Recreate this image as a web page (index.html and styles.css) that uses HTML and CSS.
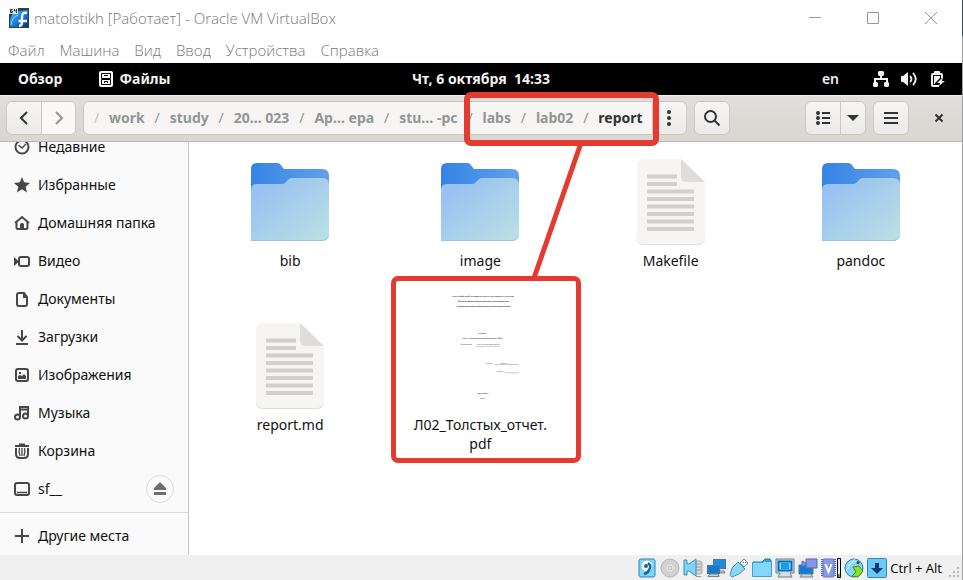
FILE: index.html
```html
<!DOCTYPE html>
<html lang="ru">
<head>
<meta charset="utf-8">
<title>matolstikh [Работает] - Oracle VM VirtualBox</title>
<link rel="stylesheet" href="styles.css">
</head>
<body>
<div class="window">
  <header class="titlebar">
    <svg class="vm-icon" width="20" height="20" viewBox="0 0 20 20"><defs><linearGradient id="vm" x1="0" y1="0" x2="1" y2="1"><stop offset="0" stop-color="#3cc4ff"/><stop offset=".6" stop-color="#1673d8"/><stop offset="1" stop-color="#07306e"/></linearGradient></defs><path fill="#2d3d52" d="M0 0h20v20H0z"/><path fill="url(#vm)" d="M1 12q1-8 9-9l9-1v17H1z"/><path fill="none" stroke="#8fdcff" d="M2 17q1-8 7-10"/><path fill="none" stroke="#fff" stroke-width="2.400" d="M18 5c-4-1-5 1-5 4v5c0 3-1 4-3 4M9.500 13H18"/><path fill="#e7ecef" d="M0 0h9v6H0z"/><path fill="none" stroke="#273743" d="M3.500 1.500h-2v3h2v-1.500h-2M5.500 1v2h2M7.500 1v4"/></svg>
    <h1>matolstikh [Работает] - Oracle VM VirtualBox</h1>
    <div class="captions">
      <button aria-label="Свернуть"><svg width="12" height="12"><path d="M0 5.500h12"/></svg></button>
      <button aria-label="Развернуть"><svg width="12" height="12"><path d="M.5.5h11v11H.5z"/></svg></button>
      <button aria-label="Закрыть окно"><svg width="12" height="12"><path d="M0 0l12 12M12 0L0 12"/></svg></button>
    </div>
  </header>
  <nav class="menubar" aria-label="Меню"><button>Файл</button><button>Машина</button><button>Вид</button><button>Ввод</button><button>Устройства</button><button>Справка</button></nav>

  <div class="topbar">
    <div class="top-left">
      <button>Обзор</button>
      <button class="app"><svg width="14" height="16" viewBox="0 0 14 16"><rect width="14" height="16" rx="2" fill="#fff"/><path fill="none" stroke="#000" d="M2.500 2.500h9v5h-9zM2.500 8.500h9v5h-9z"/><path fill="none" stroke="#000" d="M5 4.500h4M5.500 12v-1.500h3V12"/></svg>Файлы</button>
    </div>
    <button class="clock">Чт, 6 октября&nbsp; 14:33</button>
    <div class="top-right">
      <button class="lang">en</button>
      <button class="status" aria-label="Система">
        <svg width="16" height="16"><path fill="#f2f2f2" d="M6 0h4l1 1v3l-1 1H9v2h6v4l1 1v3l-1 1h-3l-1-1v-3l1-1h1V9H3v2h1l1 1v3l-1 1H1l-1-1v-3l1-1V7h6V5H6L5 4V1z"/></svg>
        <svg width="16" height="16"><path fill="#f2f2f2" d="M0 6q0-1 1-1h1l5-4v14l-5-4H1q-1 0-1-1z"/><path fill="none" stroke="#f2f2f2" stroke-width="1.800" stroke-linecap="round" d="M9.500 5.500q2 2.500 0 5"/><path fill="none" stroke="#f2f2f2" stroke-width="1.800" stroke-linecap="round" d="M12.500 2.500q4.500 5.500 0 11"/></svg>
        <svg width="16" height="16"><path fill="none" stroke="#f2f2f2" stroke-width="2" d="M13 7V4q0-1-1-1H4Q3 3 3 4v10q0 1 1 1h6"/><path fill="#f2f2f2" d="M5 1q0-1 1-1h4q1 0 1 1v2H5zM5 5h6v2L6 12v1H5zM14 6l-6 6h3l-1 3 6-5h-3z"/></svg>
      </button>
    </div>
  </div>

  <div class="toolbar">
    <div class="group">
      <button aria-label="Назад"><svg width="16" height="16"><path d="M11 2L5 8l6 6"/></svg></button>
      <button class="dim" aria-label="Вперёд"><svg width="16" height="16"><path d="M5 2l6 6-6 6"/></svg></button>
    </div>
    <div class="group path-group">
      <nav class="pathbar" aria-label="Путь">
        <span class="sep faint">/</span><a href="#">work</a><span class="sep">/</span><a href="#">study</a><span class="sep">/</span><a href="#">20… 023</a><span class="sep">/</span><a href="#">Ap… epa</a><span class="sep">/</span><a href="#">stu… -pc</a>
        <span class="marked"><span class="sep">/</span><a href="#">labs</a><span class="sep">/</span><a href="#">lab02</a><span class="sep">/</span><a href="#" class="current">report</a></span>
      </nav>
      <button aria-label="Действия"><svg class="solid" width="16" height="16"><circle cx="8" cy="2" r="2"/><circle cx="8" cy="8" r="2"/><circle cx="8" cy="14" r="2"/></svg></button>
    </div>
    <div class="group"><button aria-label="Поиск"><svg width="18" height="18"><circle cx="7.500" cy="7.500" r="5.500"/><path d="M11.500 11.500l5 5"/></svg></button></div>
    <div class="group view-group">
      <button aria-label="Список"><svg width="16" height="16"><g class="solid"><circle cx="3" cy="3" r="2"/><circle cx="3" cy="8" r="2"/><circle cx="3" cy="13" r="2"/></g><path d="M7 3h8M7 8h8M7 13h8"/></svg></button>
      <button class="narrow" aria-label="Параметры вида"><svg class="solid" width="12" height="8"><path d="M0 1h12L6 7z"/></svg></button>
    </div>
    <div class="group"><button aria-label="Меню"><svg width="16" height="16"><path d="M1 3h14M1 8h14M1 13h14"/></svg></button></div>
    <button class="close" aria-label="Закрыть"><svg width="10" height="10"><path d="M1.500 1.500l7 7M8.500 1.500l-7 7"/></svg></button>
  </div>

  <main class="content">
    <aside class="sidebar">
      <ul>
        <li><a href="#"><svg width="16" height="16"><circle cx="8" cy="8" r="6.500"/><path d="M4.500 6L8 9l4-4" stroke-width="1.500"/></svg>Недавние</a></li>
        <li><a href="#"><svg width="16" height="16"><path fill="#474747" stroke="none" d="M8 0l2.200 5.200L16 6l-4.300 3.800L13 15.500 8 12.300 3 15.500l1.300-5.700L0 6l5.800-.8z"/></svg>Избранные</a></li>
        <li><a href="#"><svg width="16" height="16"><path d="M1 8l7-6 7 6M2.500 7v5.500q0 1.500 1.500 1.500h8q1.500 0 1.500-1.500V7"/><path fill="#474747" stroke="none" d="M6 14V9q2-2 4 0v5z"/></svg>Домашняя папка</a></li>
        <li><a href="#"><svg width="16" height="16"><rect x="5" y="4" width="10" height="9" rx="2"/><path fill="#474747" stroke="none" d="M0 4l5 4.500L0 13z"/></svg>Видео</a></li>
        <li><a href="#"><svg width="16" height="16"><path d="M5 2h5l3 4v7q0 2-2 2H5q-2 0-2-2V4q0-2 2-2z"/><path fill="#474747" stroke="none" d="M9 2l5 5H9z"/></svg>Документы</a></li>
        <li><a href="#"><svg width="16" height="16"><path d="M8 1v10M3.500 7L8 11.500 12.500 7M2 15h12"/></svg>Загрузки</a></li>
        <li><a href="#"><svg width="16" height="16"><rect x="2" y="2" width="12" height="12" rx="2"/><path fill="#474747" stroke="none" d="M4 12V9l2-1 2 1 2-2 2 2v3zM5 5h2v2H5z"/></svg>Изображения</a></li>
        <li><a href="#"><svg width="16" height="16"><path d="M6 12V2h8v9M6 4.500h8"/><circle cx="3.500" cy="12" r="2.500"/><circle cx="11.500" cy="11" r="2.500"/></svg>Музыка</a></li>
        <li><a href="#"><svg width="16" height="16"><path d="M1 3h14M5 1.500h6M2 5v6q0 4 4 4h4q4 0 4-4V5"/><path stroke-width="1.300" d="M5.500 5q-1 4 .5 8M8 5v8M10.500 5q1 4-.5 8"/></svg>Корзина</a></li>
        <li><a href="#"><svg width="16" height="16"><rect x="1" y="2" width="14" height="12" rx="2"/><path stroke-width="1.500" d="M3 11.500h10"/></svg>sf__</a><button class="eject" aria-label="Извлечь"><svg width="12" height="14"><path fill="#6a6f70" stroke="none" d="M6 0l6 6v2H0V6zM0 10h12v3H0z"/></svg></button></li>
      </ul>
      <a class="other" href="#"><svg width="16" height="16"><path d="M8 1v14M1 8h14"/></svg>Другие места</a>
    </aside>

    <svg class="defs" width="0" height="0" aria-hidden="true">
      <defs>
        <linearGradient id="front" x1="0.150" y1="0.150" x2="1" y2="1"><stop offset="0" stop-color="#99c1f1"/><stop offset="1" stop-color="#bce1e5"/></linearGradient>
        <linearGradient id="back"><stop offset="0" stop-color="#3584e4"/><stop offset="1" stop-color="#62a0ea"/></linearGradient>
        <symbol id="folder" viewBox="0 0 78 78"><path fill="url(#back)" d="M6 0h20q2 0 3 1l4 5h38q7 0 7 7v20H0V6q0-6 6-6z"/><path fill="url(#front)" d="M0 78V27q0-6 6-6h25q2 0 3-1l4-4q1-1 3-1h30q7 0 7 7v49q0 7-7 7z"/><path fill="none" stroke="#99c1f1" d="M0 77.500h71q5 0 6.500-5"/></symbol>
        <symbol id="document" viewBox="0 0 68 86"><path fill="#deddda" d="M7 1h38l23 23v55q0 7-7 7H7q-7 0-7-7V8q0-7 7-7z"/><path fill="#f6f5f4" d="M7 0h37l24 24v54q0 7-7 7H7q-7 0-7-7V7q0-7 7-7z"/><path fill="#deddda" d="M44 0l24 23H50q-6 0-6-6z"/><path stroke="#d1d0cc" stroke-width="4" d="M10 17.500h30M10 25h30M10 32.500h47M10 40h47M10 47.500h47M10 55h47M10 62.500h47M10 70h47"/></symbol>
      </defs>
    </svg>
    <div class="files">
      <figure><div class="thumb"><svg class="folder"><use href="#folder"/></svg></div><figcaption>bib</figcaption></figure>
      <figure><div class="thumb"><svg class="folder"><use href="#folder"/></svg></div><figcaption>image</figcaption></figure>
      <figure><div class="thumb"><svg class="document"><use href="#document"/></svg></div><figcaption>Makefile</figcaption></figure>
      <figure><div class="thumb"><svg class="folder"><use href="#folder"/></svg></div><figcaption>pandoc</figcaption></figure>
      <figure><div class="thumb tall"><svg class="document"><use href="#document"/></svg></div><figcaption>report.md</figcaption></figure>
      <figure class="pdf">
        <div class="thumb tall"><svg class="preview" width="90" height="128" viewBox="0 0 900 1280">
          <g text-anchor="middle"><g class="heading"><text x="480" y="107">РОССИЙСКИЙ УНИВЕРСИТЕТ ДРУЖБЫ НАРОДОВ</text><text class="small" x="485" y="160">Факультет физико-математических и естественных наук</text><text class="small" x="485" y="208">Кафедра прикладной информатики и теории вероятностей</text><text x="475" y="475">ОТЧЕТ</text><text x="475" y="530">ПО ЛАБОРАТОРНОЙ РАБОТЕ № 2</text><text x="480" y="1080">МОСКВА</text></g><text x="480" y="1126">2022 г.</text></g>
          <text x="260" y="590" font-style="italic">дисциплина:</text><text x="410" y="590" text-decoration="underline">Архитектура компьютера</text>
          <text x="500" y="780">Студент:</text><text x="650" y="780">Толстых</text>
          <text x="610" y="862">Группа:</text><path stroke="#777" stroke-width="4" d="M600 786h240M695 868h145"/>
        </svg></div>
        <figcaption>Л02_Толстых_отчет.<br>pdf</figcaption>
        <svg class="callout" width="60" height="140" aria-hidden="true"><path d="M55 1L8 136"/></svg>
      </figure>
    </div>
  </main>

  <footer class="statusbar">
    <div class="devices">
      <svg viewBox="0 0 20 20"><rect x="2" y="1" width="16" height="18" rx="2" fill="#7ed6ff" stroke="#2a83bd"/><circle cx="10" cy="8" r="6" fill="#fff" stroke="#7cbfe8"/><path fill="none" stroke="#1565a5" stroke-width="2.500" d="M11 5q4 3 1 7-1 3-5 4"/><circle cx="9" cy="8" r="2" fill="#1565a5"/></svg>
      <svg viewBox="0 0 20 20"><circle cx="10" cy="10" r="9" fill="#d2d2d2" stroke="#b6b6b6"/><circle cx="10" cy="10" r="3" fill="#c4c4c4" stroke="#eee"/><circle cx="10" cy="10" r="1" fill="#eee"/></svg>
      <svg viewBox="0 0 20 20"><rect x="11" y="3" width="8" height="13" rx="2" fill="#d4d7d9" stroke="#a5a5a5"/><path stroke="#999" d="M13 6h5M13 9h5M13 12h5M13 18.500h5"/><path fill="#7fd3f5" stroke="#3a8fbb" d="M1 2h3v4h2l7-5v17l-7-5H4v4H1z"/></svg>
      <svg viewBox="0 0 20 20"><rect x="7.500" y="1.500" width="12" height="9" fill="#168ee5" stroke="#5a7186"/><path fill="#c9d5de" stroke="#71818d" d="M10 13h8l1 2h-9z"/><rect x="1.500" y="7.500" width="12" height="8" fill="#0e7ed4" stroke="#5a7186"/><path fill="#c9d5de" stroke="#71818d" d="M4 16h8l1 2.500H2z"/></svg>
      <svg viewBox="0 0 20 20"><path fill="#f2f5f7" stroke="#788" d="M11 5l4-4 4 4-4 4z"/><path fill="#8ed6f7" stroke="#4098c8" d="M9 4l7 7-6 5-7 3-2-2 2-7z"/><path stroke="#678" d="M14 4l1 1M16 4l1 1"/></svg>
      <svg viewBox="0 0 20 20"><path fill="#3a9ee5" stroke="#247bb9" d="M1 5V4h9l3-3h5l1 1v5H1z"/><path fill="#83d7ff" stroke="#3d9fd5" d="M.5 4.500h10l2-1h7v15H.5z"/></svg>
      <svg viewBox="0 0 20 20"><path fill="#d5dce2" stroke="#6c7b89" d="M1 1h18v14h-4l2 4H3l2-4H1z"/><rect x="3.500" y="3.500" width="13" height="9" fill="#85dcff" stroke="#0670bb" stroke-width="2"/><path fill="#189ce9" d="M6 5h8v6H6z"/></svg>
      <svg viewBox="0 0 20 20"><path fill="#0e7ed4" stroke="#59738d" d="M1 7h14v9H1z"/><path fill="#c9d5de" stroke="#71818d" d="M4 16h9l2 3H2z"/><path fill="#8298e5" stroke="#5269b9" d="M8 1h11v9H8zM4 3l4 2v2L4 9z"/></svg>
      <svg class="slim" viewBox="0 0 15 20"><path stroke="#5265ad" stroke-width="15" stroke-dasharray="1 1" d="M7.500 1v18"/><rect x="2" y="1" width="11" height="18" rx="1" fill="#8599e5" stroke="#6277ca"/><path fill="none" stroke="#fff" stroke-width="2" d="M4.500 6l3 8 3-8"/></svg>
      <svg class="meter" viewBox="0 0 4 20"><path fill="#e8e8e8" stroke="#000" d="M.5.5h3v19h-3z"/><path fill="#1ecb1e" d="M1 16h2v3H1z"/></svg>
      <svg viewBox="0 0 20 20"><circle cx="10" cy="10" r="9" fill="#80d5f8" stroke="#287eaa"/><path fill="none" stroke="#d9f3ff" d="M4 8q5-6 11-4M2 13q5-8 9-12"/><path fill="#8be02d" stroke="#3d8f18" d="M9 9l6-1 4 5-5 6-6-1 4-4z"/><circle cx="14" cy="4.500" r="1.500" fill="#17466b"/></svg>
      <svg viewBox="0 0 20 20"><rect x=".5" y=".5" width="19" height="19" rx="1" fill="#69caf7" stroke="#3385b7"/><path fill="#073c78" d="M8 5h4v5h4l-6 6-6-6h4z"/></svg>
    </div>
    <span>Ctrl + Alt</span>
    <svg class="grip" viewBox="0 0 10 10"><path fill="#b8b8b8" d="M8 0h2v2H8zM4 4h2v2H4zM8 4h2v2H8zM0 8h2v2H0zM4 8h2v2H4zM8 8h2v2H8z"/></svg>
  </footer>
</div>
</body>
</html>
```
FILE: styles.css
```css
*, *::before, *::after { box-sizing: border-box; }
body { margin: 0; font: 14px/20px "Noto Sans", sans-serif; color: #111; background: #fff; }
button { font: inherit; color: inherit; border: 0; background: none; padding: 0; }
a { color: inherit; text-decoration: none; }
svg { display: block; flex: none; }

.window { min-height: 100vh; display: flex; flex-direction: column; border-right: 1px solid #a0a0a0; }

/* Host window */
.titlebar { height: 36px; display: flex; align-items: center; padding: 0 2px 0 9px; gap: 5px; margin-right: -1px; border-right: 1px solid #3d4a50; }
h1, .menubar { font-family: "Open Sans", sans-serif; font-size: 15px; font-weight: 300; color: #777; }
h1 { margin: 0; flex: 1; }
.captions { display: flex; }
.captions button { width: 58px; display: grid; place-items: center; }
.captions path { fill: none; stroke: #999; }
.menubar { height: 27px; display: flex; align-items: center; gap: 15px; padding-left: 8px; }

/* GNOME top bar */
.topbar { height: 32px; background: #000; color: #f2f2f2; font-weight: 700; display: grid; grid-template-columns: 1fr auto 1fr; align-items: center; }
.top-left, .top-right, .app, .status { display: flex; align-items: center; }
.top-left { gap: 37px; padding-left: 18px; }
.app { gap: 6px; }
.top-right { justify-content: flex-end; gap: 34px; padding-right: 17px; }
.lang { font-weight: 600; }
.status { gap: 12px; }

/* File manager header */
.toolbar { height: 47px; display: flex; align-items: center; gap: 7px; padding: 0 6px; background: linear-gradient(#e1dedb, #dad6d2); box-shadow: inset 0 1px #f3f1f0; border-bottom: 1px solid #bfb8b1; }
.toolbar svg { fill: none; stroke: #2e3436; stroke-width: 2; }
.toolbar .solid { fill: #2e3436; stroke: none; }
.group { display: flex; height: 34px; border: 1px solid #cdc7c2; border-radius: 6px; background: linear-gradient(#f6f5f4, #edebe9); overflow: hidden; }
.group button { width: 34px; display: grid; place-items: center; }
.group button + button, .pathbar + button { border-left: 1px solid #cdc7c2; }
.group button + .narrow { width: 25px; }
.group .dim { background: #faf9f8; }
.group .dim svg { stroke: #929595; }
.path-group { overflow: visible; }
.pathbar { display: flex; align-items: center; gap: 9px; padding: 0 9px; background: #f6f5f4; border-radius: 6px 0 0 6px; color: #929595; font-weight: 700; white-space: nowrap; }
.sep { width: 7px; text-align: center; font-weight: 400; }
.faint { opacity: .5; }
.current { color: #2e3436; }
.marked { position: relative; display: flex; align-items: center; gap: 9px; }
.marked::after { content: ""; position: absolute; z-index: 2; inset: -16px -16px -18px -3px; border: 6px solid #e43b30; border-radius: 7px; pointer-events: none; }
.view-group { margin-left: auto; }
.close { width: 34px; height: 34px; margin-left: 6px; display: grid; place-items: center; }

/* Places */
.content { flex: 1; display: flex; }
.sidebar { width: 189px; flex: none; background: #fafafa; border-right: 1px solid #cdc7c2; overflow: hidden; }
.sidebar ul { list-style: none; margin: -14px 0 0; padding: 0 0 4px; }
.sidebar li { height: 38px; display: flex; align-items: center; justify-content: space-between; padding-right: 14px; }
.sidebar a { display: flex; align-items: center; gap: 8px; padding-left: 14px; }
.sidebar svg { fill: none; stroke: #474747; stroke-width: 2; }
.eject { width: 28px; height: 28px; border: 1px solid #dcdad8; border-radius: 50%; display: grid; place-items: center; }
.sidebar .other { height: 43px; padding-top: 4px; border-top: 1px solid #dddbd9; }

/* Files */
.defs { position: absolute; }
.files { flex: 1; display: grid; grid-template-columns: repeat(4, 1fr); align-content: start; row-gap: 16px; padding: 12px 6px 0; }
figure { margin: 0; text-align: center; }
.thumb { height: 97px; display: flex; align-items: flex-end; justify-content: center; padding-bottom: 6px; }
.tall { height: 129px; }
.folder { width: 78px; height: 78px; margin-bottom: 4px; }
.document { width: 68px; height: 86px; }
figcaption { line-height: 19px; }
.pdf { position: relative; }
.pdf .thumb { padding-bottom: 1px; }
.pdf::after { content: ""; position: absolute; inset: -10px -5px -10px 6px; border: 5px solid #e43b30; border-radius: 7px; }
.preview { font: 22px "Liberation Serif", serif; fill: #222; }
.preview .heading { font-size: 24px; font-weight: 700; fill: #000; }
.preview .small { font-size: 20px; }
.callout { position: absolute; left: 141px; bottom: calc(100% + 4px); overflow: visible; }
.callout path { fill: none; stroke: #e43b30; stroke-width: 5; }

/* Device indicators */
.statusbar { height: 25px; display: flex; align-items: center; justify-content: flex-end; gap: 3px; padding-right: 3px; background: #f0f0f0; color: #000; font-family: "Open Sans", sans-serif; font-size: 13px; }
.devices { display: flex; gap: 3px; }
.devices svg { width: 20px; height: 20px; }
.devices .slim { width: 15px; }
.devices .meter { width: 4px; margin-left: -2px; }
.grip { width: 10px; height: 10px; margin: 8px 0 0 4px; }
```
